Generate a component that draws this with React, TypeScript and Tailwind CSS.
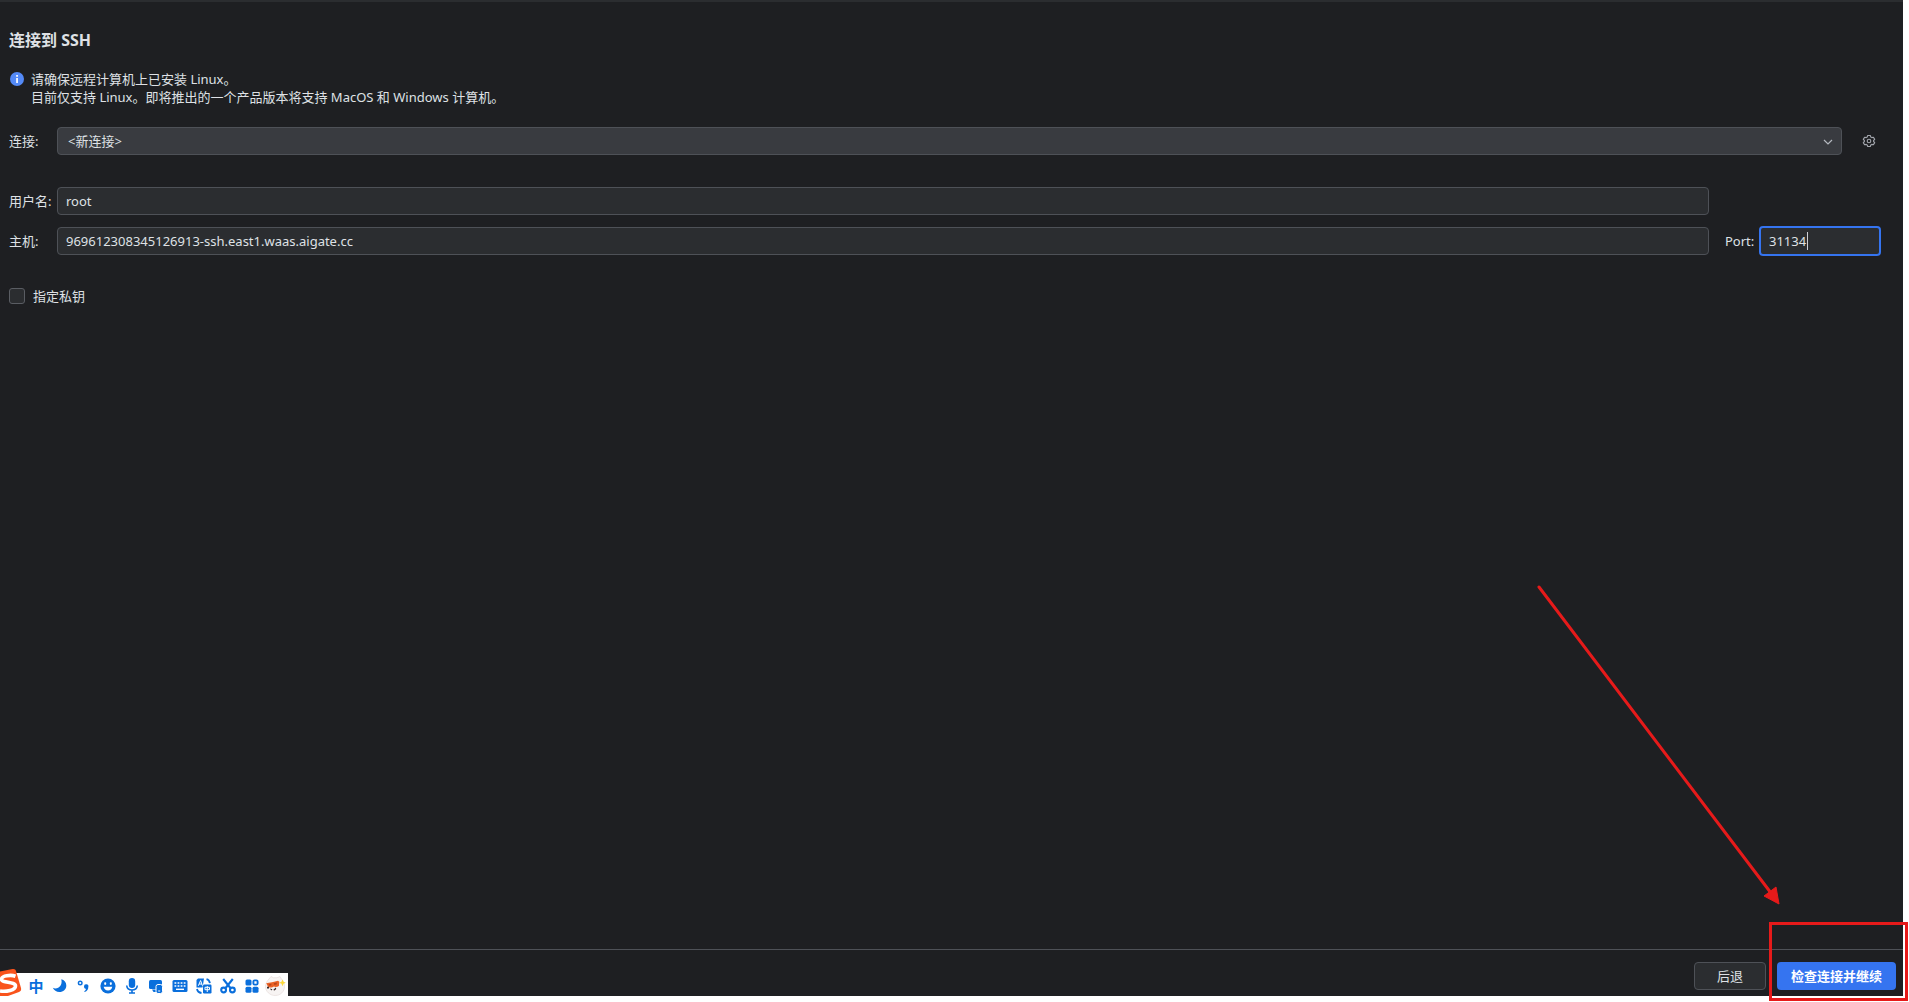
import React, { useState } from 'react';

const inputClass =
  'h-7 w-full rounded border border-[#4e5157] bg-[#2b2d30] px-2 text-[13px] text-[#dfe1e5] outline-none';

const InfoIcon = () => (
  <svg className="mt-[2px] h-[14px] w-[14px] shrink-0" viewBox="0 0 14 14">
    <circle cx="7" cy="7" r="7" fill="#548af7" />
    <rect x="6.2" y="3" width="1.7" height="1.8" fill="#fff" />
    <rect x="6.2" y="6" width="1.7" height="5" fill="#fff" />
  </svg>
);

const GearIcon = () => (
  <svg width="14" height="14" viewBox="0 0 14 14" fill="none" stroke="#a4a7ae" strokeWidth="1.1" strokeLinejoin="round">
    <path d="M5.7 1.5h2.6l.5 1.5 1 .6 1.6-.4 1.3 2.2L11.6 6.5v1l1.1 1.1-1.3 2.2-1.6-.4-1 .6-.5 1.5H5.7L5.2 11l-1-.6-1.6.4-1.3-2.2 1.1-1.1v-1L1.3 5.4l1.3-2.2 1.6.4 1-.6z" />
    <circle cx="7" cy="7" r="1.8" />
  </svg>
);

// Ícones da barra do IME, todos em 16x16
const MoonIcon = () => (
  <svg width="16" height="16" viewBox="0 0 16 16" fill="#0a6fdc">
    <path d="M9.3 1.2c3 .7 5 3.2 5 6.2 0 3.9-3.1 6.6-6.9 6.6-3 0-5.4-1.5-6.600-4.200 1.600.8 3.800.9 5.800-.4 2.700-1.700 3.600-5 2.700-8.200z" />
  </svg>
);

const PunctuationIcon = () => (
  <svg width="16" height="16" viewBox="0 0 16 16" fill="none">
    <circle cx="4.2" cy="5" r="1.8" stroke="#0a6fdc" strokeWidth="1.4" />
    <path d="M8 8.500a2.200 2.200 0 1 1 4.300.6c0 2.400-1.100 4.200-3.600 5l-.5-.9c1-.5 1.700-1.300 1.800-2.400-1.100 0-2-.9-2-2.300z" fill="#0a6fdc" />
  </svg>
);

const SmileIcon = () => (
  <svg width="16" height="16" viewBox="0 0 16 16">
    <circle cx="8" cy="8" r="7.6" fill="#0a6fdc" />
    <rect x="4.2" y="4.3" width="2" height="2.6" rx=".8" fill="#fff" />
    <rect x="9.8" y="4.3" width="2" height="2.6" rx=".8" fill="#fff" />
    <path d="M3.7 8.800h8.600c-.3 2.300-2 3.700-4.300 3.700s-4-1.400-4.300-3.700z" fill="#fff" />
  </svg>
);

const MicIcon = () => (
  <svg width="16" height="16" viewBox="0 0 16 16" fill="none">
    <rect x="4.800" y="0" width="6.400" height="10" rx="3.200" fill="#0a6fdc" />
    <path d="M2.700 7.500c.3 3 2.400 4.500 5.300 4.500s5-1.500 5.300-4.500M8 12v3M5 15h6" stroke="#0a6fdc" strokeWidth="1.600" />
  </svg>
);

const DevicesIcon = () => (
  <svg width="16" height="16" viewBox="0 0 16 16" fill="#0a6fdc">
    <rect x="1" y="2" width="13" height="9" rx="1.5" />
    <path d="M4 11.500h5V14H5.500z" />
    <rect x="8" y="6.500" width="6.500" height="9" rx="2" stroke="#fff" strokeWidth="1" />
    <path d="M10.200 12.500h2v1h-2z" fill="#fff" />
  </svg>
);

const KeyboardIcon = () => (
  <svg width="16" height="16" viewBox="0 0 16 16">
    <rect x=".5" y="2" width="15" height="12" rx="1.5" fill="#0a6fdc" />
    <path d="M2.5 5h11M2.5 8h11" stroke="#fff" strokeWidth="1.6" strokeDasharray="1.8 1.27" />
    <path d="M4 11.3h8" stroke="#fff" strokeWidth="1.4" />
  </svg>
);

const TranslateIcon = () => (
  <svg width="16" height="16" viewBox="0 0 16 16" fill="none">
    <path d="M2 .5h6L6.500 9.500H.5V2z" fill="#0a6fdc" />
    <path d="M2.300 7.800 4.600 2.500 6.500 7.800M3 6h3" stroke="#fff" strokeWidth="1" />
    <rect x="7" y="6.500" width="8.500" height="9" rx="1.200" fill="#0a6fdc" />
    <path d="M9 9.300h4.500v2.400H9zM11.250 8v6" stroke="#fff" strokeWidth="1" />
    <path d="M10.500 1.200c2 .5 3 1.800 3.400 4M1 11c.4 2.200 1.600 3.500 4.500 4" stroke="#0a6fdc" strokeWidth="1.800" />
  </svg>
);

const ScissorsIcon = () => (
  <svg width="16" height="16" viewBox="0 0 16 16" fill="none" stroke="#0a6fdc" strokeWidth="2.1">
    <path d="M3.200 1 10.800 10.500M12.800 1 5.200 10.500" />
    <circle cx="3.600" cy="12" r="2.400" />
    <circle cx="12.400" cy="12" r="2.400" />
  </svg>
);

const AppsIcon = () => (
  <svg width="16" height="16" viewBox="0 0 16 16" fill="#0a6fdc">
    <rect x="1.5" y="1.5" width="6" height="6" rx="1.5" />
    <rect x="9.4" y="2.4" width="4.2" height="4.2" rx="1.2" fill="none" stroke="#0a6fdc" strokeWidth="1.9" />
    <rect x="1.5" y="8.700" width="6" height="6" rx="1.5" />
    <rect x="8.500" y="8.700" width="6" height="6" rx="1.5" />
  </svg>
);

const MascotIcon = () => (
  <svg width="22" height="22" viewBox="0 0 22 22">
    <path d="M5 4 7 1.500l2.500 1.300h3.500L16 1.500 17.500 4c2 2 3 4.500 3 7.500 0 5-4 9-9.300 9S1.500 16.500 1.500 11.500C1.500 8.500 3 6 5 4z" fill="#f7f4f3" stroke="#e6dcdb" strokeWidth=".7" />
    <path d="M2.200 8.200c3.500-.2 8-1.200 11.800-2.400l1.300 1-.4 4.200c-1.500.9-3.600 1.200-5.200.5-1.300 1.200-3.800 1.500-5.500.5z" fill="#ea6226" />
    <path d="M4.500 9.200 7.500 8.800l-.3 1.700-2 .3zM9.700 8.300l3.200-.7-.2 2-2.300.4z" fill="#b8451c" />
    <path d="M3 11.800h2v1.600H3zM6 13.500l2.500.8-1.300 1.200zM9.200 15l2.500-2.500.6 1.600-1.700 1.400z" fill="#3a2a2a" />
    <path d="m18.500 4.500 1 2.300 2.300 1-2.300 1-1 2.400-1-2.400-2.300-1 2.300-1z" fill="#fbd83a" />
  </svg>
);

const SogouLogo = () => (
  <svg className="absolute bottom-0 left-0" width="22" height="28" viewBox="0 0 22 28">
    <path d="M0 3.500 12.500 1c2-.4 3 .3 3.500 2l5 17c.5 2-.2 3.300-2 4L8 28H0z" fill="#f9531c" />
    <path d="M15.500 8.200C11 6.500 1.500 7.500 1.500 11.300c0 4 14 2 14 6.700 0 4.300-9.500 6-15.500 5" fill="none" stroke="#fff" strokeWidth="3.600" />
  </svg>
);

const imeItems = [
  { name: 'moon', icon: <MoonIcon /> },
  { name: 'punctuation', icon: <PunctuationIcon /> },
  { name: 'emoji', icon: <SmileIcon /> },
  { name: 'voice', icon: <MicIcon /> },
  { name: 'devices', icon: <DevicesIcon /> },
  { name: 'keyboard', icon: <KeyboardIcon /> },
  { name: 'translate', icon: <TranslateIcon /> },
  { name: 'screenshot', icon: <ScissorsIcon /> },
  { name: 'toolbox', icon: <AppsIcon /> },
];

const ImeBar = () => (
  <div className="absolute bottom-[6px] left-0 h-[23px] w-[288px] bg-white">
    <SogouLogo />
    <div className="flex h-full items-center gap-2 pt-[3px] pl-[28px]">
      <button className="w-4 text-[15px] leading-4 font-bold text-[#0a6fdc]">中</button>
      {imeItems.map((item) => (
        <button key={item.name} aria-label={item.name} className="h-4 w-4">
          {item.icon}
        </button>
      ))}
      <button aria-label="mascot" className="-ml-1 h-[22px] w-[22px]">
        <MascotIcon />
      </button>
    </div>
  </div>
);

// Seta e moldura vermelhas apontando para o botão principal
const Highlight = () => (
  <>
    <svg className="pointer-events-none absolute right-[125px] bottom-[92px]" width="254" height="330" viewBox="0 0 254 330">
      <path d="M9 7 241 313" stroke="#e61a1a" strokeWidth="3" strokeLinecap="round" />
      <path d="M249 324 234 316 246 307z" fill="#e61a1a" stroke="#e61a1a" strokeWidth="1" />
    </svg>
    <div className="pointer-events-none absolute right-px bottom-px h-[79px] w-[139px] border-3 border-[#e61a1a]" />
  </>
);

export default function App() {
  const [user, setUser] = useState('root');
  const [host, setHost] = useState('969612308345126913-ssh.east1.waas.aigate.cc');
  const [port, setPort] = useState('31134');
  const [useKey, setUseKey] = useState(false);

  return (
    <div className="relative flex min-h-screen flex-col bg-white pr-[6px] pb-[6px] font-['Noto_Sans','Noto_Sans_CJK_SC',sans-serif] text-[13px] leading-[18px] text-[#dfe1e5]">
      <main className="flex flex-1 flex-col border-t-2 border-[#2b2d30] bg-[#1e1f22]">
        <form className="flex-1 pt-[26px] pr-[22px] pl-[9px]">
          <h1 className="text-base leading-6 font-bold">连接到 SSH</h1>

          <div className="mt-[18px] flex gap-[7px] pl-px">
            <InfoIcon />
            <p>
              请确保远程计算机上已安装 Linux。
              <br />
              目前仅支持 Linux。即将推出的一个产品版本将支持 MacOS 和 Windows 计算机。
            </p>
          </div>

          <div className="mt-[21px] flex items-center">
            <label htmlFor="connection" className="w-12 shrink-0">连接:</label>
            <div className="relative flex-1">
              <select
                id="connection"
                className="block h-7 w-full appearance-none rounded border border-[#4e5157] bg-[#393b40] px-[10px] outline-none"
              >
                <option>&lt;新连接&gt;</option>
              </select>
              <svg className="pointer-events-none absolute top-3 right-[9px]" width="10" height="6" viewBox="0 0 10 6" fill="none">
                <path d="m1 1 4 4 4-4" stroke="#b4b8bf" strokeWidth="1.2" />
              </svg>
            </div>
            <button type="button" aria-label="settings" className="ml-[15px] flex h-6 w-6 items-center justify-center">
              <GearIcon />
            </button>
          </div>

          <div className="mt-8 grid grid-cols-[48px_1fr_172px] items-center gap-y-3">
            <label htmlFor="user" className="whitespace-nowrap">用户名:</label>
            <input id="user" className={inputClass} value={user} onChange={(e) => setUser(e.target.value)} />
            <span />
            <label htmlFor="host">主机:</label>
            <input id="host" className={inputClass} value={host} onChange={(e) => setHost(e.target.value)} />
            <div className="flex h-7 items-center pl-4">
              <label htmlFor="port" className="w-[34px] shrink-0">Port:</label>
              <div className="relative flex-1">
                <input
                  id="port"
                  className="block h-[30px] w-full rounded border-2 border-[#3574f0] bg-[#2b2d30] px-2 caret-transparent outline-none"
                  value={port}
                  onChange={(e) => setPort(e.target.value)}
                />
                <span className="pointer-events-none absolute top-[6px] left-12 h-[18px] w-px bg-[#ced0d6]" />
              </div>
            </div>
          </div>

          <label className="mt-8 flex items-center gap-2">
            <input
              type="checkbox"
              className="h-4 w-4 appearance-none rounded-[3px] border border-[#5a5d63] bg-[#2b2d30] checked:bg-[#3574f0]"
              checked={useKey}
              onChange={(e) => setUseKey(e.target.checked)}
            />
            指定私钥
          </label>
        </form>

        <footer className="flex justify-end gap-[11px] border-t border-[#4e5157] pt-3 pr-[7px] pb-[6px]">
          <button className="h-7 w-[72px] rounded border border-[#4e5157] bg-[#2b2d30]">后退</button>
          <button className="h-7 w-[119px] rounded bg-[#3574f0] font-bold text-white">检查连接并继续</button>
        </footer>
      </main>

      <ImeBar />
      <Highlight />
    </div>
  );
}
